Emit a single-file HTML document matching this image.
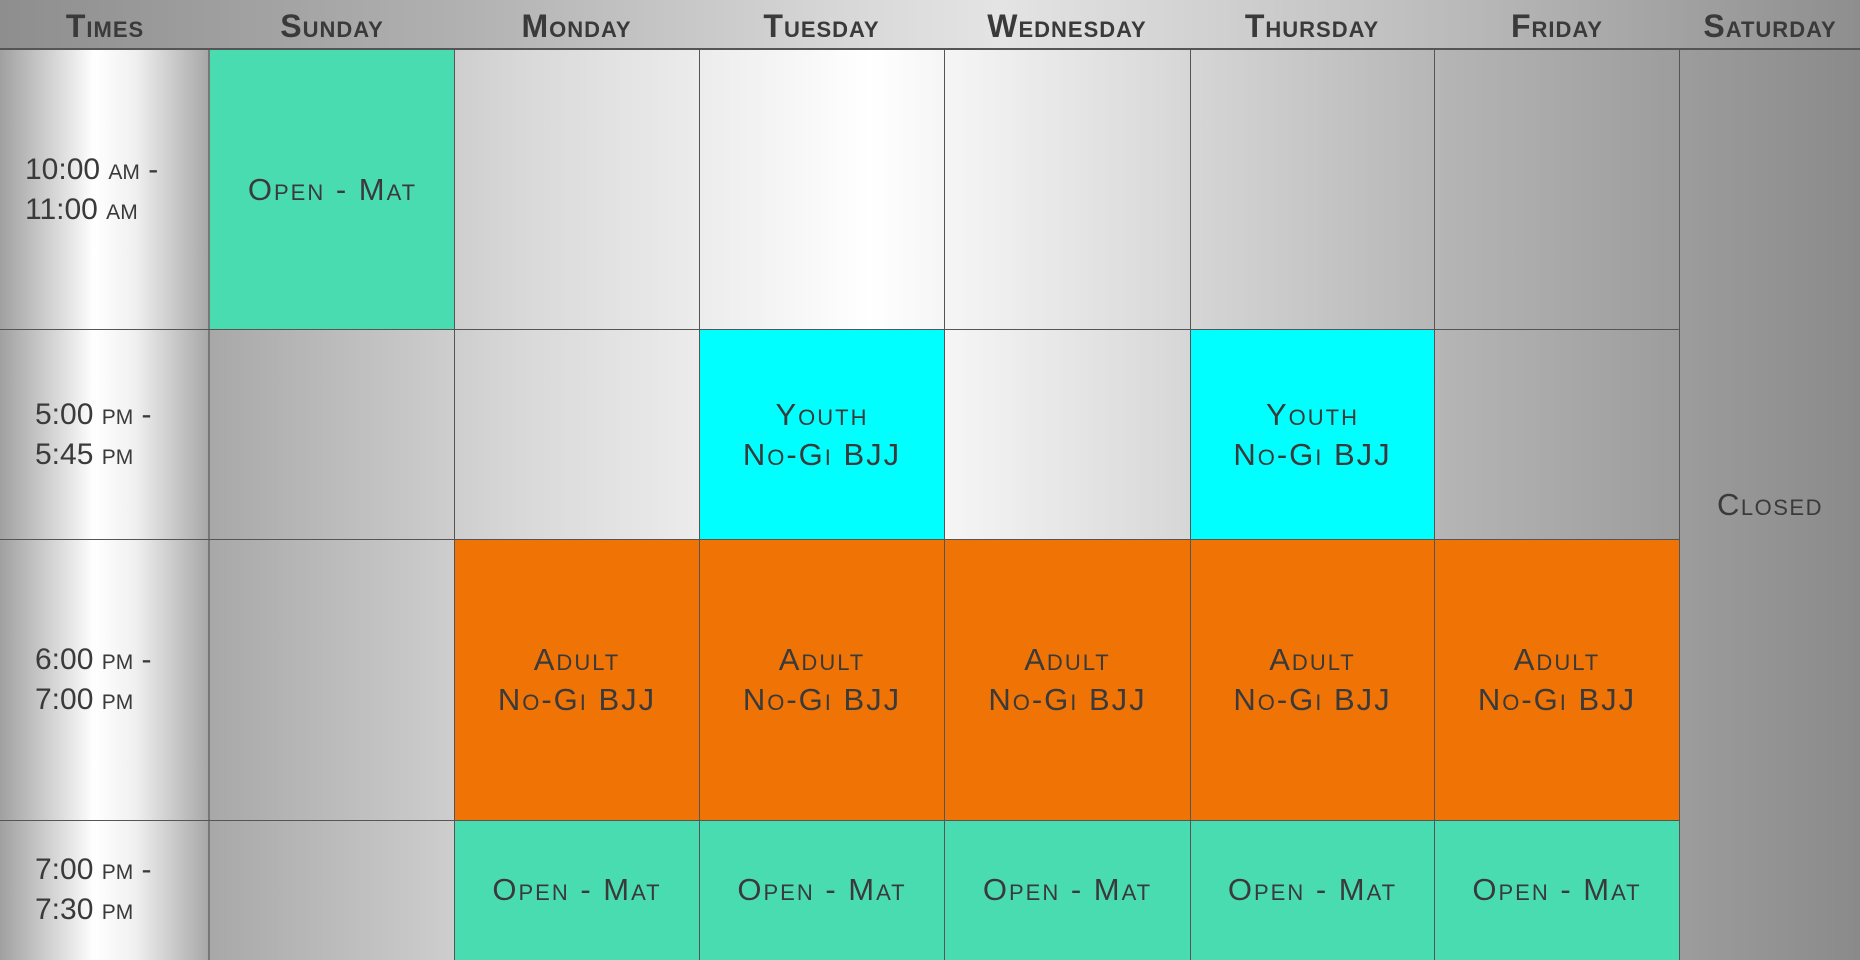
<!DOCTYPE html>
<html><head><style>
*{margin:0;padding:0;box-sizing:border-box}
body{width:1860px;height:960px;overflow:hidden;position:relative;font-family:"Liberation Sans",sans-serif;color:#333;
background:linear-gradient(to right,#a8a8a8 210px,#d8d8d8 520px,#fff 870px,#e2e2e2 1100px,#b4b4b4 1450px,#8a8a8a 1860px)}
.hd{position:absolute;left:0;top:0;width:1860px;height:50px;border-bottom:2px solid #555;
background:linear-gradient(to right,#8e8e8e 0,#b0b0b0 450px,#d8d8d8 850px,#e4e4e4 1000px,#c0c0c0 1400px,#8e8e8e 1860px)}
.h{position:absolute;top:0;height:50px;line-height:52px;text-align:center;font-weight:bold;font-size:32px;font-variant:small-caps;letter-spacing:1px;color:#3a3a3a;white-space:nowrap}
.times{position:absolute;left:0;top:50px;width:210px;height:910px;border-right:2px solid #777;
background:linear-gradient(to right,#a0a0a0,#e8e8e8 35%,#fff 45%,#f0f0f0 65%,#a8a8a8)}
.c{position:absolute;display:flex;align-items:center;justify-content:center;text-align:center;font-variant:small-caps;font-size:31px;line-height:40px;letter-spacing:2px;color:#3a3a3a}
.t{position:absolute;left:25px;font-size:30px;line-height:40px;font-variant:small-caps;letter-spacing:0px;color:#3a3a3a}
.g{background:#4adcb1}.cy{background:#00ffff}.o{background:#f07306}
.l{position:absolute;z-index:2}
</style></head><body>
<div class="hd"></div>
<div class="h" style="left:0;width:210px">Times</div>
<div class="h" style="left:210px;width:244px">Sunday</div>
<div class="h" style="left:454px;width:245px">Monday</div>
<div class="h" style="left:699px;width:245px">Tuesday</div>
<div class="h" style="left:944px;width:246px">Wednesday</div>
<div class="h" style="left:1190px;width:244px">Thursday</div>
<div class="h" style="left:1434px;width:246px">Friday</div>
<div class="h" style="left:1680px;width:180px">Saturday</div>
<div class="times"></div>
<div class="t" style="top:150px">10:00 am -<br>11:00 am</div>
<div class="t" style="top:395px;left:35px">5:00 pm -<br>5:45 pm</div>
<div class="t" style="top:640px;left:35px">6:00 pm -<br>7:00 pm</div>
<div class="t" style="top:850px;left:35px">7:00 pm -<br>7:30 pm</div>
<div class="c g" style="left:210px;top:50px;width:245px;height:280px">Open - Mat</div>
<div class="c cy" style="left:699px;top:329px;width:246px;height:211px">Youth<br>No-Gi BJJ</div>
<div class="c cy" style="left:1190px;top:329px;width:245px;height:211px">Youth<br>No-Gi BJJ</div>
<div class="c o" style="left:454px;top:539px;width:246px;height:282px">Adult<br>No-Gi BJJ</div>
<div class="c o" style="left:699px;top:539px;width:246px;height:282px">Adult<br>No-Gi BJJ</div>
<div class="c o" style="left:944px;top:539px;width:247px;height:282px">Adult<br>No-Gi BJJ</div>
<div class="c o" style="left:1190px;top:539px;width:245px;height:282px">Adult<br>No-Gi BJJ</div>
<div class="c o" style="left:1434px;top:539px;width:246px;height:282px">Adult<br>No-Gi BJJ</div>
<div class="c g" style="left:454px;top:820px;width:246px;height:140px">Open - Mat</div>
<div class="c g" style="left:699px;top:820px;width:246px;height:140px">Open - Mat</div>
<div class="c g" style="left:944px;top:820px;width:247px;height:140px">Open - Mat</div>
<div class="c g" style="left:1190px;top:820px;width:245px;height:140px">Open - Mat</div>
<div class="c g" style="left:1434px;top:820px;width:246px;height:140px">Open - Mat</div>
<div class="c" style="left:1680px;top:50px;width:180px;height:910px;letter-spacing:1.5px">Closed</div>
<div class="l" style="left:0;top:329px;width:1680px;border-top:1px solid #555"></div>
<div class="l" style="left:0;top:539px;width:1680px;border-top:1px solid #555"></div>
<div class="l" style="left:0;top:820px;width:1680px;border-top:1px solid #555"></div>
<div class="l" style="left:454px;top:50px;height:910px;border-left:1px solid #555"></div>
<div class="l" style="left:699px;top:50px;height:910px;border-left:1px solid #555"></div>
<div class="l" style="left:944px;top:50px;height:910px;border-left:1px solid #555"></div>
<div class="l" style="left:1190px;top:50px;height:910px;border-left:1px solid #555"></div>
<div class="l" style="left:1434px;top:50px;height:910px;border-left:1px solid #555"></div>
<div class="l" style="left:1679px;top:50px;height:910px;border-left:1px solid #555"></div>
</body></html>
